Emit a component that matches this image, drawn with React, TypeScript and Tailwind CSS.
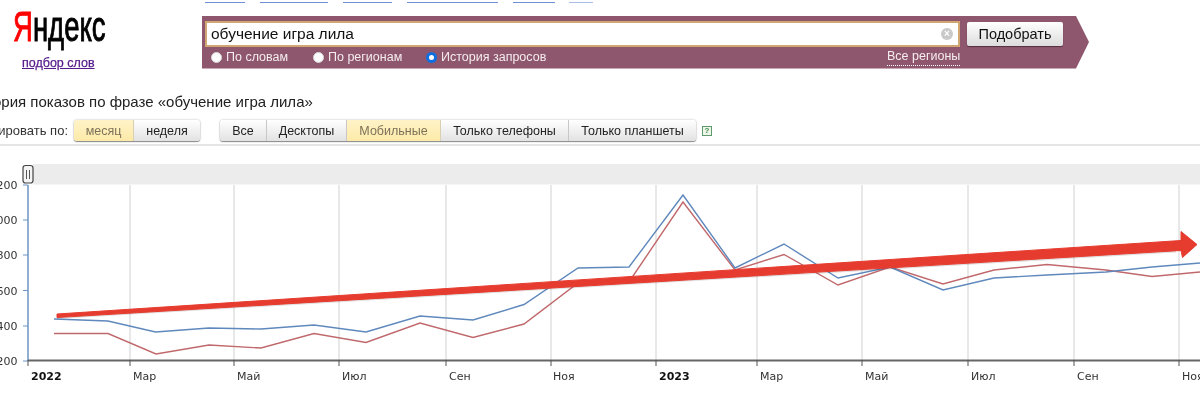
const navLinks = [
  { w: 40, gap: 15 },
  { w: 68, gap: 15 },
  { w: 49, gap: 15 },
  { w: 91, gap: 15 },
  { w: 42, gap: 14 },
  { w: 24, gap: 0 },
]

const searchModes = [
  { label: "По словам", w: 102 },
  { label: "По регионам", w: 113 },
  { label: "История запросов", w: 120, checked: true },
]

const periodButtons = [
  { label: "месяц", w: 60, active: true },
  { label: "неделя", w: 66 },
]

const deviceButtons = [
  { label: "Все", w: 47 },
  { label: "Десктопы", w: 80 },
  { label: "Мобильные", w: 94, active: true },
  { label: "Только телефоны", w: 128 },
  { label: "Только планшеты", w: 127 },
]

const yLabels = [
  { label: "200", y: 185 },
  { label: "000", y: 220 },
  { label: "800", y: 255 },
  { label: "600", y: 290.5 },
  { label: "400", y: 326 },
  { label: "200", y: 361 },
]

const xTicks = [
  { label: "2022", x: 28, tx: 31, bold: true },
  { label: "Мар", x: 130, tx: 133 },
  { label: "Май", x: 234, tx: 237 },
  { label: "Июл", x: 339, tx: 342 },
  { label: "Сен", x: 446, tx: 449 },
  { label: "Ноя", x: 551, tx: 553 },
  { label: "2023", x: 656, tx: 659, bold: true },
  { label: "Мар", x: 757, tx: 760 },
  { label: "Май", x: 862, tx: 865 },
  { label: "Июл", x: 968, tx: 971 },
  { label: "Сен", x: 1074, tx: 1077 },
  { label: "Ноя", x: 1179, tx: 1182 },
]

const bluePoints =
  "54,319 108,321 155.5,332 209,328 261,329 314,325 366,332 420,316 473,320 524,304.5 578,268 629,267 683,195 735,268 784,244 838,278 890,267 943,290 994,278 1047,275 1106,272 1152,267 1200,263"
const redPoints =
  "54,333.5 108,333.5 156,354 209,345 261,348 314,333.5 366,342.5 420,323 473,337.5 524,324 578,283 629,282 683,202 735,270 784,254.5 838,285 890,267 943,284 994,270 1047,264.5 1106,270 1152,276.5 1200,272"

function ToggleButton({ label, w, active }: { label: string; w: number; active?: boolean }) {
  return (
    <button
      style={{ width: w }}
      className={
        active
          ? "h-[21px] text-[12.5px] leading-[20px] text-[#7d7259] border-r border-[#d8d0b0] bg-gradient-to-b from-[#fff3c8] to-[#fdeaa8] first:rounded-l-[3px] last:rounded-r-[3px]"
          : "h-[21px] text-[12.5px] leading-[20px] text-[#222] border-r border-[#c8c8c8] last:border-r-0 bg-gradient-to-b from-[#ffffff] to-[#e2e2e2] first:rounded-l-[3px] last:rounded-r-[3px]"
      }
    >
      {label}
    </button>
  )
}

function ButtonGroup({ items }: { items: { label: string; w: number; active?: boolean }[] }) {
  return (
    <div className="flex rounded-[3px] shadow-[0_1px_1px_#8a8a8a,0_0_2px_#aaaaaa]">
      {items.map((b) => (
        <ToggleButton key={b.label} {...b} />
      ))}
    </div>
  )
}

function Chart() {
  return (
    <svg width="1200" height="254" viewBox="0 146 1200 254" className="block">
      <rect x="33" y="164" width="1167" height="20.5" fill="#ececec" />
      {xTicks.slice(1).map((t) => (
        <line key={t.x} x1={t.x} y1="185" x2={t.x} y2="360" stroke="#e0e0e0" strokeWidth="1.5" />
      ))}
      <line x1="28" y1="185" x2="28" y2="361" stroke="#6d94c4" strokeWidth="1.5" />
      {yLabels.map((l) => (
        <g key={l.y}>
          <line x1="23" y1={l.y} x2="28" y2={l.y} stroke="#6d94c4" />
          <text x="17.5" y={l.y + 4} textAnchor="end" fontSize="11" fontFamily="'DejaVu Sans', sans-serif" fill="#333">
            {l.label}
          </text>
        </g>
      ))}
      <line x1="28" y1="360.5" x2="1200" y2="360.5" stroke="#666" strokeWidth="2" />
      {xTicks.map((t) => (
        <g key={t.x}>
          <line x1={t.x} y1="360" x2={t.x} y2="366" stroke="#555" />
          <text
            x={t.tx}
            y="379.5"
            fontSize="11"
            fontWeight={t.bold ? 700 : 400}
            fontFamily="'DejaVu Sans', sans-serif"
            fill={t.bold ? "#111" : "#333"}
          >
            {t.label}
          </text>
        </g>
      ))}
      <polyline points={redPoints} fill="none" stroke="#c0686b" strokeWidth="1.4" />
      <polyline points={bluePoints} fill="none" stroke="#5f88bd" strokeWidth="1.4" />
      {/* handle of the navigator */}
      <rect x="23" y="165.5" width="10" height="17.5" rx="2.5" fill="#f4f4f4" stroke="#444" strokeWidth="1.2" />
      <line x1="26.5" y1="170" x2="26.5" y2="179" stroke="#555" />
      <line x1="29.5" y1="170" x2="29.5" y2="179" stroke="#555" />
      {/* hand drawn trend arrow */}
      <polygon points="57,314 1176,241 1176,251 57,317.5" fill="#000" opacity="0.12" transform="translate(0,1.5)" />
      <polygon
        points="57,314 1181,240.5 1181,231.5 1197,244.5 1182.5,257.5 1181,250.5 57,317.5"
        fill="#e63c2f"
        stroke="#e63c2f"
        strokeWidth="1"
        strokeLinejoin="round"
      />
    </svg>
  )
}

export default function App() {
  return (
    <div className="w-[1200px] h-[400px] overflow-hidden bg-white font-['Liberation_Sans',Arial,sans-serif] text-[#222] blur-[0.35px]">
      {/* cropped top links */}
      <div className="flex h-[3px] pl-[205px]">
        {navLinks.map((l, i) => (
          <div
            key={i}
            style={{ width: l.w, marginRight: l.gap }}
            className={i === 5 ? "h-[3px] border-b border-[#a9bde6]" : "h-[3px] border-b border-[#6f8fd6]"}
          />
        ))}
      </div>

      <div className="flex h-[70px]">
        <div className="w-[202px] shrink-0 pl-[13px]">
          <div className="w-[91px] h-[45px] mt-[1px] whitespace-nowrap origin-left scale-x-[0.64] text-[43px] leading-[45px] text-black [-webkit-text-stroke:1px_black]">
            <span className="text-[#ff0000] [-webkit-text-stroke:1px_#ff0000]">Я</span>ндекс
          </div>
          <a className="block w-[72px] ml-[9px] mt-[7px] whitespace-nowrap text-[12.5px] leading-[15px] text-[#551a8b] underline [-webkit-text-stroke:0.25px_#551a8b]">
            подбор слов
          </a>
        </div>

        <div className="mt-[13px] w-[887px] h-[52.5px] bg-[#8f576d] [clip-path:polygon(0_0,874px_0,887px_26px,874px_100%,0_100%)]">
          <div className="flex pt-[5px] pl-[3px]">
            <div className="flex items-center w-[755px] h-[26px] bg-white border-2 border-[#d0a673] pl-[4px] pr-[5px]">
              <span className="flex-1 text-[15.5px] text-[#111]">обучение игра лила</span>
              <span className="flex items-center justify-center w-[12px] h-[12px] rounded-full bg-[#c9c9c9] text-[10px] leading-none font-bold text-white">
                ×
              </span>
            </div>
            <button className="ml-[7px] mt-[1px] w-[96px] h-[24px] rounded-[2px] bg-gradient-to-b from-[#ffffff] to-[#dcdcdc] text-[14.5px] leading-[22px] text-[#111] shadow-[0_1px_1px_#55303f]">
              Подобрать
            </button>
          </div>
          <div className="relative flex items-center h-[18px] mt-[1px] pl-[9px] text-[12.5px] text-[#f4ecef]">
            {searchModes.map((m) => (
              <label key={m.label} style={{ width: m.w }} className="flex items-center gap-[4px] whitespace-nowrap">
                <input
                  type="radio"
                  name="mode"
                  defaultChecked={m.checked}
                  className="appearance-none shrink-0 w-[11px] h-[11px] rounded-full bg-white border border-[#d8d8d8] checked:border-[3px] checked:border-[#0f6fe0]"
                />
                {m.label}
              </label>
            ))}
            <a className="absolute left-[685px] top-0 leading-[17px] border-b border-dotted border-white">
              Все регионы
            </a>
          </div>
        </div>
      </div>

      <h1 className="mt-[20px] -ml-[32px] h-[18px] whitespace-nowrap text-[15px] leading-[18px] font-normal text-[#222]">
        История показов по фразе «обучение игра лила»
      </h1>

      <div className="flex items-center h-[21px] mt-[9px]">
        <span className="w-[74px] overflow-hidden flex justify-end pr-[6px] whitespace-nowrap text-[13px] text-[#333]">
          Группировать по:
        </span>
        <ButtonGroup items={periodButtons} />
        <div className="w-[20px]" />
        <ButtonGroup items={deviceButtons} />
        <span className="flex items-center justify-center ml-[6px] w-[10px] h-[10px] border border-[#5f9a6d] bg-[#eef6ea] text-[8px] leading-none font-bold text-[#3c8a50]">
          ?
        </span>
      </div>

      <div className="h-[2px] mt-[3px] bg-[#e5e5e5]" />

      <Chart />
    </div>
  )
}
